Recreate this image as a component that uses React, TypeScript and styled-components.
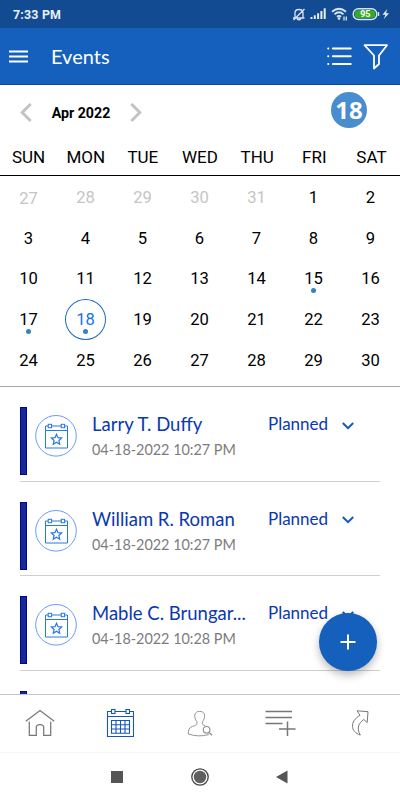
import React from 'react';
import styled, { createGlobalStyle, css } from 'styled-components';

const Global = createGlobalStyle`
  * { box-sizing: border-box; }
  body { margin: 0; background: #fff; font-family: Lato, "Open Sans", sans-serif; }
  svg { display: block; flex: none; }
  button { border: 0; padding: 0; margin: 0; background: none; font: inherit; color: inherit; }
`;

const Screen = styled.div`
  width: 400px;
  height: 800px;
  display: flex;
  flex-direction: column;
  overflow: hidden;
  background: #fff;
  position: relative;
`;

const StatusBar = styled.div`
  height: 28px;
  flex: none;
  display: flex;
  align-items: center;
  justify-content: space-between;
  padding: 1px 9px 0 13px;
  background: #124b91;
  color: #e9eff7;
  font: 700 12.4px Roboto, sans-serif;
  letter-spacing: 0.2px;
`;

const AppBar = styled.header`
  height: 57px;
  flex: none;
  display: flex;
  align-items: center;
  padding: 0 11px 0 9px;
  background: #1560bd;
  border-bottom: 1px solid #0b47ab;
  color: #fff;
`;

const Title = styled.h1`
  margin: 0 auto 0 23px;
  font-size: 20px;
  font-weight: 400;
  line-height: 24px;
  padding-bottom: 1px;
`;

const FilterButton = styled.button`
  margin-left: 10px;
`;

const CalendarPanel = styled.section`
  flex: none;
  height: 302px;
  border-bottom: 1px solid #a9a9a9;
  font-family: Roboto, sans-serif;
  color: #000;
`;

const MonthRow = styled.div`
  height: 55px;
  display: flex;
  align-items: center;
  padding: 0 33px 0 20px;
`;

const Month = styled.div`
  width: 86px;
  margin: 0 6px 0 6px;
  text-align: center;
  font-size: 14.2px;
  font-weight: 700;
`;

const TodayBadge = styled.div`
  width: 36px;
  height: 36px;
  margin: -6px 0 0 auto;
  border-radius: 50%;
  background: #4a8dcf;
  color: #fff;
  font: 700 24px/36px "Noto Sans", sans-serif;
  text-align: center;
`;

const Weekdays = styled.div`
  display: grid;
  grid-template-columns: repeat(7, 1fr);
  height: 36px;
  border-bottom: 1px solid #000;
  font-size: 17px;
  line-height: 35px;
  text-align: center;
`;

const Days = styled.div`
  display: grid;
  grid-template-columns: repeat(7, 1fr);
  grid-auto-rows: 40.7px;
  padding: 1px 1px 0 0;
`;

const Day = styled.div<{ $muted?: boolean; $low?: boolean; $selected?: boolean }>`
  position: relative;
  width: 41px;
  height: 41px;
  justify-self: center;
  border-radius: 50%;
  font-size: 16.6px;
  line-height: 41px;
  text-align: center;
  color: ${p => (p.$muted ? '#c5c5c5' : p.$selected ? '#1673dc' : '#000')};
  ${p => p.$low && css`padding-top: 1px;`}
  ${p => p.$selected && css`box-shadow: inset 0 0 0 1px #1668c5;`}
`;

const EventDot = styled.i`
  position: absolute;
  left: 18px;
  top: 30px;
  width: 5px;
  height: 5px;
  border-radius: 50%;
  background: #3182cb;
`;

const EventList = styled.main`
  flex: 1;
  min-height: 0;
  overflow: hidden;
  padding: 0 20px;
`;

const EventRow = styled.article`
  height: 94.5px;
  display: flex;
  padding-top: 20px;
  border-bottom: 1px solid #cfcfcf;
`;

const Stripe = styled.div`
  width: 7px;
  height: 68px;
  flex: none;
  background: #152a98;
  border: 1px solid #050589;
`;

const EventIcon = styled.div`
  width: 42px;
  height: 42px;
  margin: 8px 0 0 8px;
  flex: none;
`;

const EventText = styled.div`
  width: 160px;
  margin: 5px 0 0 15px;
`;

const Name = styled.div`
  color: #0a38b0;
  font-size: 18.5px;
  line-height: 24px;
  white-space: nowrap;
`;

const When = styled.div`
  margin-top: 3px;
  color: #7c7c7c;
  font-size: 14.4px;
  line-height: 22px;
  white-space: nowrap;
`;

const Status = styled.button`
  display: flex;
  align-items: center;
  gap: 14px;
  height: 24px;
  margin: 5px 0 0 16px;
  color: #0a38b0;
  font-size: 17px;
  line-height: 24px;

  svg { margin-top: 3px; }
`;

const Fab = styled.button`
  position: absolute;
  left: 319px;
  top: 613px;
  width: 57.5px;
  height: 57.5px;
  border-radius: 50%;
  display: flex;
  align-items: center;
  justify-content: center;
  background: #1560bd;
  box-shadow: 0 4px 8px rgba(0, 0, 0, 0.28);
`;

const TabBar = styled.nav`
  flex: none;
  height: 58px;
  display: grid;
  grid-template-columns: repeat(5, 1fr);
  place-items: center;
  padding-bottom: 1px;
  border-top: 1px solid #c6c6c6;
`;

const SystemBar = styled.footer`
  flex: none;
  height: 48px;
  display: flex;
  align-items: center;
  justify-content: center;
  gap: 67px;
  padding-right: 1px;
  border-top: 1px solid #f5f5f5;
  background: #fff;
`;

const StatusIcons = () => (
  <svg width="100" height="18" viewBox="291.5 6 100 18" fill="none" stroke="#d9e4f2" strokeWidth="1.3">
    <path d="M293.5 18h11.5M295.5 17.5v-4.5q0-3.5 4-3.5t4 3.5v4.5M297.5 19q2 1.5 4 0M294 20l11-11" />
    <g stroke="none" fill="#e5edf7">
      <rect x="311" y="17" width="2" height="2" /><rect x="314.3" y="15.3" width="2" height="3.7" />
      <rect x="317.6" y="13.3" width="2" height="5.7" /><rect x="320.9" y="11" width="2" height="8" />
      <rect x="324.2" y="8.3" width="2" height="10.7" />
    </g>
    <g strokeWidth="1.8"><path d="M332.5 11.8q7-6 14 0M335 14.3q4.5-4 9 0M337.4 16.8q2.1-1.8 4.2 0" /></g>
    <circle cx="339.5" cy="18.5" r="1.3" fill="#e5edf7" stroke="none" />
    <path d="M344.5 16.5v4M346.8 16.5v4" />
    <rect x="353.7" y="8.7" width="23.6" height="10.8" rx="5.2" strokeWidth="1.4" />
    <path d="M379 12v4" strokeWidth="1.4" />
    <rect x="355.2" y="10.2" width="20.6" height="7.8" rx="3.4" fill="#36ad20" stroke="none" />
    <text x="365.8" y="17.3" textAnchor="middle" fill="#fff" stroke="none" fontFamily="Roboto, sans-serif" fontSize="9" fontWeight="700" letterSpacing="0">95</text>
    <path d="M387.7 9l-4.7 5.8h3l-1.8 4.4 5.3-6h-3z" fill="#e9eff7" stroke="none" />
  </svg>
);

const MenuIcon = () => (
  <svg width="19" height="14" fill="none" stroke="#fff" strokeWidth="2"><path d="M0 2.5h19M0 7.5h19M0 12.5h19" /></svg>
);

const ListIcon = () => (
  <svg width="26" height="20" fill="none" stroke="#fff" strokeWidth="2" strokeLinecap="round">
    <path d="M6.9 2.5h17.8M6.9 10.3h17.8M6.9 18h17.8M2.2 2.5h.1M2.2 10.3h.1M2.2 18h.1" />
  </svg>
);

const FilterIcon = () => (
  <svg width="27" height="27" fill="none" stroke="#fff" strokeWidth="1.8" strokeLinejoin="round">
    <path d="M2.5 2.2h22.5l-8 10.3v8.5l-5 4.5v-13z" />
  </svg>
);

const Arrow = ({ right }: { right?: boolean }) => (
  <svg width="12" height="20" fill="none" stroke="#c3c3c3" strokeWidth="3">
    <path d={right ? 'M1.3 1l8.5 8.5-8.5 8.5' : 'M10.7 1L2.2 9.5l8.5 8.5'} />
  </svg>
);

const StarCalendarIcon = () => (
  <svg width="42" height="42" fill="none" stroke="#2876e8">
    <circle cx="21" cy="20.8" r="20.3" stroke="#6a9df0" />
    <path d="M13 11h-2.5v22h22v-22h-2.7M16.5 11h10M10.5 15.5h22" />
    <rect x="13.2" y="9.3" width="3.4" height="3.4" /><rect x="26.2" y="9.3" width="3.4" height="3.4" />
    <path strokeWidth="1.2" d="M21.5 19.3l1.5 3.4 3.6.3-2.7 2.5.8 3.7-3.2-1.9-3.2 1.9.8-3.7-2.7-2.5 3.6-.3z" />
  </svg>
);

const Chevron = () => (
  <svg width="12" height="8" fill="none" stroke="#1259bd" strokeWidth="2"><path d="M.8 1l5.2 5.2L11.2 1" /></svg>
);

const HomeIcon = () => (
  <svg width="30" height="28" fill="none" stroke="#777" strokeWidth="1.25">
    <path d="M.8 12.3L15 1.5l14.2 10.8M4.3 12.5v13.8h7V18.5q0-3 3.7-3t3.7 3v7.8h7V12.5" />
  </svg>
);

const CalendarIcon = () => (
  <svg width="28" height="30" viewBox="-.5 0 28 30" fill="none" stroke="#1556bd" strokeWidth="1.1">
    <path d="M5 3.5H1v25h26v-25h-4M8.5 3.5h11M1 8.5h26" />
    <rect x="5" y="1.5" width="3.5" height="4" /><rect x="19.5" y="1.5" width="3.5" height="4" />
    <path d="M5 12.5h18v12.8H5zM5 16.8h18M5 21h18M9.5 12.5v12.8M14 12.5v12.8M18.5 12.5v12.8" />
  </svg>
);

const PersonIcon = () => (
  <svg width="26" height="27" fill="none" stroke="#949494" strokeWidth="1">
    <path d="M9.8 11.5C6.9 8 6.5 1.3 12.7 1.3s5.8 6.7 2.9 10.2c-1 3 .4 3.5 2.8 4.2M9.8 11.5c.8 4-2 4-4.5 4.9C2.2 17.5 1.1 20 1.3 24q10 3.4 20.5.6" />
    <circle cx="19.6" cy="19.8" r="3.3" strokeWidth="1.2" /><path d="M22 22.2l3 3" strokeWidth="1.5" />
  </svg>
);

const AddListIcon = () => (
  <svg width="32" height="28" fill="none" stroke="#777" strokeWidth="1.5">
    <path d="M1.5 2.5h26.5M1.5 8.5h26.5M1.5 14.6h17M15 20h16.5M23.5 12.5v14.5" />
  </svg>
);

const ShareIcon = () => (
  <svg width="18" height="26" fill="none" stroke="#777" strokeWidth="1">
    <path d="M6 .8l11 .9-.8 10.8-3.4-3C7.8 13 5.2 18 9.3 25 -.5 22-1.7 11.5 9 5.3z" />
  </svg>
);

const weekdays = ['SUN', 'MON', 'TUE', 'WED', 'THU', 'FRI', 'SAT'];
const days = [27, 28, 29, 30, 31, ...Array.from({ length: 30 }, (_, i) => i + 1)];
const busy = [15, 17, 18];
const events = [
  { name: 'Larry T. Duffy', when: '04-18-2022 10:27 PM' },
  { name: 'William R. Roman', when: '04-18-2022 10:27 PM' },
  { name: 'Mable C. Brungar...', when: '04-18-2022 10:28 PM' },
];

export default function App() {
  return (
    <Screen>
      <Global />
      <StatusBar><span>7:33 PM</span><StatusIcons /></StatusBar>
      <AppBar>
        <button aria-label="Menu"><MenuIcon /></button>
        <Title>Events</Title>
        <button aria-label="List"><ListIcon /></button>
        <FilterButton aria-label="Filter"><FilterIcon /></FilterButton>
      </AppBar>
      <CalendarPanel>
        <MonthRow>
          <button aria-label="Previous month"><Arrow /></button>
          <Month>Apr 2022</Month>
          <button aria-label="Next month"><Arrow right /></button>
          <TodayBadge>18</TodayBadge>
        </MonthRow>
        <Weekdays>{weekdays.map(d => <span key={d}>{d}</span>)}</Weekdays>
        <Days>
          {days.map((d, i) => (
            <Day key={i} $muted={i < 5} $low={i === 0} $selected={i >= 5 && d === 18}>
              {d}
              {i >= 5 && busy.includes(d) && <EventDot />}
            </Day>
          ))}
        </Days>
      </CalendarPanel>
      <EventList>
        {events.map(e => (
          <EventRow key={e.name}>
            <Stripe />
            <EventIcon><StarCalendarIcon /></EventIcon>
            <EventText><Name>{e.name}</Name><When>{e.when}</When></EventText>
            <Status>Planned<Chevron /></Status>
          </EventRow>
        ))}
        <EventRow><Stripe /></EventRow>
      </EventList>
      <TabBar>
        <HomeIcon /><CalendarIcon /><PersonIcon /><AddListIcon /><ShareIcon />
      </TabBar>
      <SystemBar>
        <svg width="13" height="12"><rect width="12" height="12" fill="#555" /></svg>
        <svg width="18" height="18"><circle cx="9" cy="9" r="8.2" fill="none" stroke="#444" strokeWidth="1.3" /><circle cx="9" cy="9" r="6.2" fill="#606060" /></svg>
        <svg width="12" height="14"><path d="M11.5 .5v13L0 7z" fill="#555" /></svg>
      </SystemBar>
      <Fab aria-label="Add event">
        <svg width="16" height="16" stroke="#fff" strokeWidth="2"><path d="M.5 8h15M8 .5v15" /></svg>
      </Fab>
    </Screen>
  );
}
